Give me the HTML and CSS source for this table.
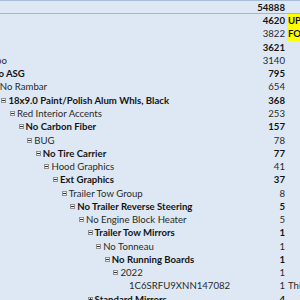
FILE: index.html
```html
<!DOCTYPE html>
<html>
<head>
<meta charset="utf-8">
<link rel="stylesheet" href="styles.css">
</head>
<body>
<div class="sheet">
  <div class="row head"><div class="label"></div><div class="num b">54888</div><div class="extra"></div></div>
  <div class="row"><div class="label"></div><div class="num b">4620</div><div class="extra hl">UP</div></div>
  <div class="row"><div class="label"></div><div class="num">3822</div><div class="extra hl">FO</div></div>
  <div class="row"><div class="label"></div><div class="num b">3621</div><div class="extra"></div></div>
  <div class="row"><div class="label" style="--l:-2"><span class="btn minus"></span><span>Turbo</span></div><div class="num">3140</div><div class="extra"></div></div>
  <div class="row b"><div class="label" style="--l:-1"><span class="btn minus"></span><span>No ASG</span></div><div class="num">795</div><div class="extra"></div></div>
  <div class="row"><div class="label" style="--l:0"><span class="btn minus"></span><span>No Rambar</span></div><div class="num">654</div><div class="extra"></div></div>
  <div class="row b"><div class="label" style="--l:1"><span class="btn minus"></span><span>18x9.0 Paint/Polish Alum Whls, Black</span></div><div class="num">368</div><div class="extra"></div></div>
  <div class="row"><div class="label" style="--l:2"><span class="btn minus"></span><span>Red Interior Accents</span></div><div class="num">253</div><div class="extra"></div></div>
  <div class="row b"><div class="label" style="--l:3"><span class="btn minus"></span><span>No Carbon Fiber</span></div><div class="num">157</div><div class="extra"></div></div>
  <div class="row"><div class="label" style="--l:4"><span class="btn minus"></span><span>BUG</span></div><div class="num">78</div><div class="extra"></div></div>
  <div class="row b"><div class="label" style="--l:5"><span class="btn minus"></span><span>No Tire Carrier</span></div><div class="num">77</div><div class="extra"></div></div>
  <div class="row"><div class="label" style="--l:6"><span class="btn minus"></span><span>Hood Graphics</span></div><div class="num">41</div><div class="extra"></div></div>
  <div class="row b"><div class="label" style="--l:7"><span class="btn minus"></span><span>Ext Graphics</span></div><div class="num">37</div><div class="extra"></div></div>
  <div class="row"><div class="label" style="--l:8"><span class="btn minus"></span><span>Trailer Tow Group</span></div><div class="num">8</div><div class="extra"></div></div>
  <div class="row b"><div class="label" style="--l:9"><span class="btn minus"></span><span>No Trailer Reverse Steering</span></div><div class="num">5</div><div class="extra"></div></div>
  <div class="row"><div class="label" style="--l:10"><span class="btn minus"></span><span>No Engine Block Heater</span></div><div class="num">5</div><div class="extra"></div></div>
  <div class="row b"><div class="label" style="--l:11"><span class="btn minus"></span><span>Trailer Tow Mirrors</span></div><div class="num">1</div><div class="extra"></div></div>
  <div class="row"><div class="label" style="--l:12"><span class="btn minus"></span><span>No Tonneau</span></div><div class="num">1</div><div class="extra"></div></div>
  <div class="row b"><div class="label" style="--l:13"><span class="btn minus"></span><span>No Running Boards</span></div><div class="num">1</div><div class="extra"></div></div>
  <div class="row"><div class="label" style="--l:14"><span class="btn minus"></span><span>2022</span></div><div class="num">1</div><div class="extra"></div></div>
  <div class="row"><div class="label" style="--l:15"><span class="btn none"></span><span>1C6SRFU9XNN147082</span></div><div class="num">1</div><div class="extra">This</div></div>
  <div class="row b"><div class="label" style="--l:11"><span class="btn plus"></span><span>Standard Mirrors</span></div><div class="num">4</div><div class="extra"></div></div>
</div>
</body>
</html>
```
FILE: styles.css
```css
html, body {
  margin: 0;
  padding: 0;
  width: 300px;
  height: 300px;
  overflow: hidden;
  background: #dde8f4;
}

.sheet {
  width: 330px;
  border-top: 1px solid #a9bcda;
  font-family: Lato, "Liberation Sans", Arial, sans-serif;
  font-size: 9.6px;
  color: #2a2a2a;
}

.row {
  display: grid;
  grid-template-columns: 246px 40px 44px;
  height: 13.27px;
  align-items: center;
  white-space: nowrap;
}

.row.head {
  height: 12px;
  border-bottom: 1px solid #a7b7cb;
}

.b {
  font-weight: bold;
  color: #141414;
}

.label {
  display: flex;
  align-items: center;
  gap: 2px;
  margin-left: calc(var(--l, 0) * 8.62px - 7.24px);
  height: 100%;
}

.num {
  text-align: right;
  padding-right: 1px;
  line-height: 13px;
}

.extra {
  margin-left: 1px;
  padding-left: 1px;
  height: 100%;
  line-height: 13.27px;
  font-weight: normal;
}

.extra.hl {
  background: #ffff00;
  font-weight: bold;
  color: #111;
}

.btn {
  position: relative;
  flex: none;
  width: 5px;
  height: 5px;
  box-sizing: border-box;
  border: 1px solid #929292;
  background: #f2f5f8;
}

.btn.none {
  visibility: hidden;
}

.btn.minus::after,
.btn.plus::after {
  content: "";
  position: absolute;
  left: 0;
  top: 1px;
  width: 3px;
  height: 1px;
  background: #333;
}

.btn.plus::before {
  content: "";
  position: absolute;
  left: 1px;
  top: 0;
  width: 1px;
  height: 3px;
  background: #333;
}
```
